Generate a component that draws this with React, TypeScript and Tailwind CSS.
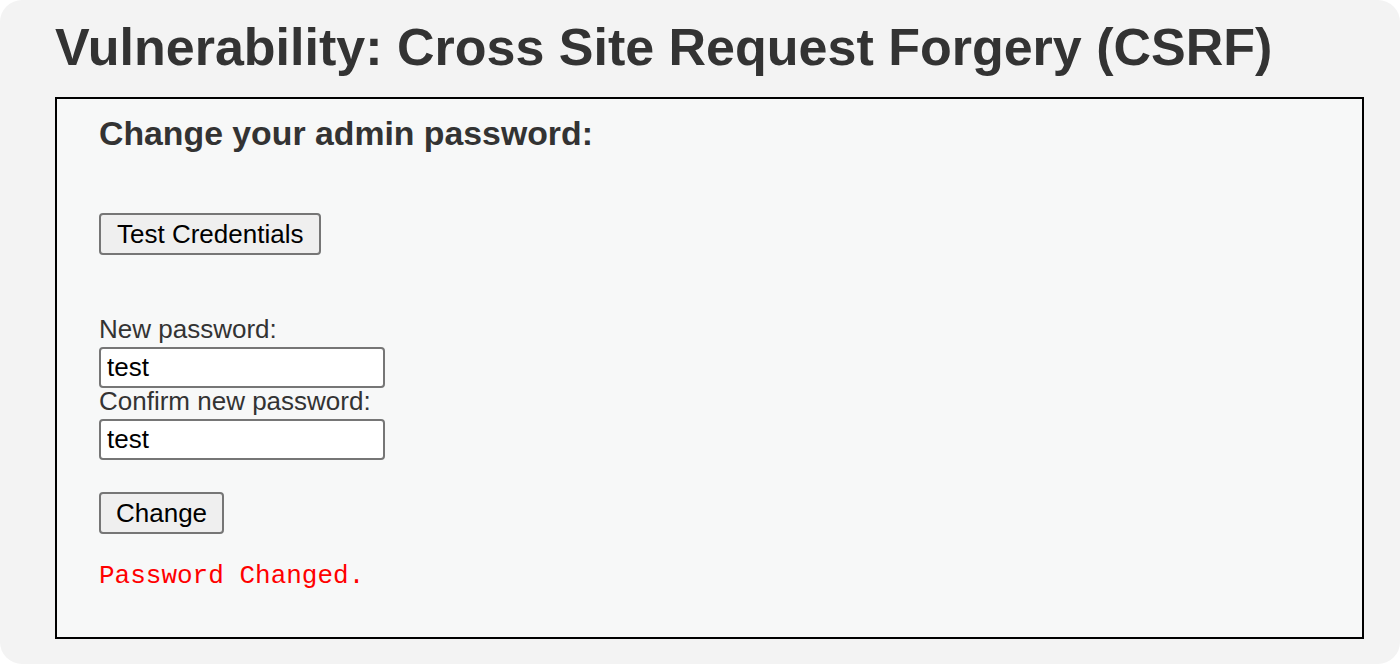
import React from "react";

const App = () => {
  return (
    <div className="h-[664px] w-full bg-white font-['Liberation_Sans',Arial,sans-serif] text-[#333333]">
      <div className="h-full rounded-[22px] bg-[#f3f3f3] pl-[55px] pr-[36px] pt-[17px]">
        <h1 className="text-[52px] leading-[60px] font-bold mb-[20px] whitespace-nowrap">
          Vulnerability: Cross Site Request Forgery (CSRF)
        </h1>

        <div className="h-[542px] border-2 border-black bg-[#f7f8f8] pl-[42px] pt-[14px]">
          <h3 className="text-[33.8px] leading-[40px] font-bold">Change your admin password:</h3>

          <button
            type="button"
            className="mt-[60px] flex h-[42px] items-center rounded-[4px] border-2 border-[#767676] bg-[#efefef] px-[16px] text-[26px] text-black"
          >
            Test Credentials
          </button>

          <form className="mt-[61px] flex flex-col items-start" onSubmit={(e) => e.preventDefault()}>
            <label className="text-[26px] leading-[26px]">New password:</label>
            <input
              type="text"
              defaultValue="test"
              className="mt-[5px] h-[41px] w-[286px] rounded-[4px] border-2 border-[#767676] bg-white px-[6px] text-[26px] text-black outline-none"
            />
            <label className="text-[26px] leading-[26px]">Confirm new password:</label>
            <input
              type="text"
              defaultValue="test"
              className="mt-[5px] h-[41px] w-[286px] rounded-[4px] border-2 border-[#767676] bg-white px-[6px] text-[26px] text-black outline-none"
            />
            <button
              type="button"
              className="mt-[32px] flex h-[42px] items-center rounded-[4px] border-2 border-[#767676] bg-[#efefef] px-[15px] text-[26px] text-black"
            >
              Change
            </button>
          </form>

          <pre className="mt-[27px] font-['Liberation_Mono','Courier_New',monospace] text-[26px] leading-[30px] text-[#ff0000]">
            Password Changed.
          </pre>
        </div>
      </div>
    </div>
  );
};

export default App;
